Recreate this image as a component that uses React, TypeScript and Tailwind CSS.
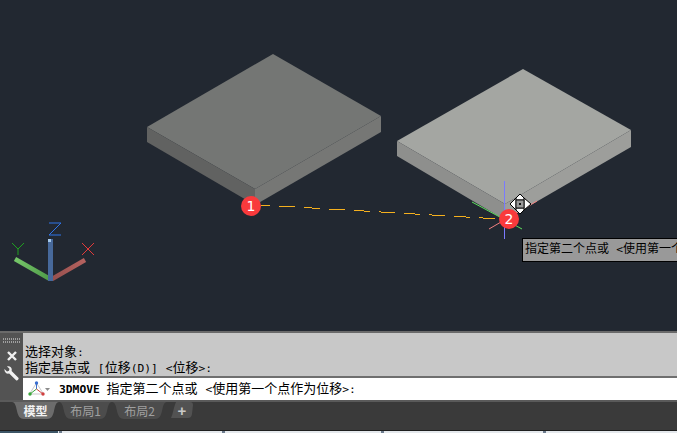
import React from "react";

const cjk = { fontFamily: '"DejaVu Sans Mono","Noto Sans CJK SC",monospace' };
const badge = { fontFamily: '"DejaVu Sans",sans-serif' };

function L({ children, bold }: { children: React.ReactNode; bold?: boolean }) {
  return <span className={bold ? "text-[11.3px] font-bold" : "text-[11.3px]"}>{children}</span>;
}

function Canvas() {
  return (
    <div className="relative h-[331px] overflow-hidden bg-[#222831]">
      <svg width="677" height="331" className="block" shapeRendering="crispEdges">
        <defs>
          <linearGradient id="g" x1="16" y1="259" x2="50" y2="279" gradientUnits="userSpaceOnUse">
            <stop offset="0" stopColor="#76c769" />
            <stop offset="1" stopColor="#4f9a48" />
          </linearGradient>
          <linearGradient id="r" x1="53" y1="279" x2="85" y2="260" gradientUnits="userSpaceOnUse">
            <stop offset="0" stopColor="#96504e" />
            <stop offset="1" stopColor="#b5625f" />
          </linearGradient>
        </defs>
        <g shapeRendering="auto">
          <polygon points="273,54 381,116 255,189 147,127" fill="#747674" />
          <polygon points="147,127 255,189 255,205 147,142" fill="#616261" />
          <polygon points="255,189 381,116 381,132 255,205" fill="#767775" />
          <polygon points="523,69 631,130 505,204 397,141" fill="#a4a6a2" />
          <polygon points="397,141 505,204 505,220 397,156" fill="#8e8f8d" />
          <polygon points="505,204 631,130 631,147 505,220" fill="#9d9e9b" />
        </g>
        <line x1="261" y1="205" x2="500" y2="219" stroke="#f5b01e" strokeWidth="1" strokeDasharray="16.5 8.5" strokeDashoffset="7" />
        <g shapeRendering="auto">
          <line x1="472" y1="202" x2="522" y2="229" stroke="#5fe05f" strokeWidth="1" />
          <line x1="489" y1="229" x2="537" y2="201" stroke="#f08080" strokeWidth="1" />
        </g>
        <line x1="504.5" y1="181" x2="504.5" y2="239" stroke="#7a7aff" strokeWidth="1" />
        <g shapeRendering="auto">
          <polygon points="520,194 526,200 514,200" fill="#fff" stroke="#000" />
          <polygon points="520,214 526,208 514,208" fill="#fff" stroke="#000" />
          <polygon points="510,204 516,198 516,210" fill="#fff" stroke="#000" />
          <polygon points="531,204 524,198 524,210" fill="#fff" stroke="#000" />
          <rect x="516" y="200" width="8" height="8" fill="#999" stroke="#111" />
          <rect x="519" y="203" width="2" height="2" fill="#111" />
        </g>
        <g shapeRendering="auto">
          <line x1="50" y1="279" x2="15" y2="259" stroke="url(#g)" strokeWidth="4.5" />
          <line x1="52" y1="279" x2="85" y2="260" stroke="url(#r)" strokeWidth="4.5" />
          <rect x="48" y="239" width="5" height="42" fill="#47699b" />
          <rect x="48" y="239" width="3" height="3" fill="#a5c8ea" />
          <polyline points="49,223 61,223 49,235 61,235" fill="none" stroke="#2f74e8" strokeWidth="1" />
          <polyline points="12,243 18,249 24,243" fill="none" stroke="#1fa01f" strokeWidth="1" />
          <line x1="18" y1="249" x2="18" y2="255" stroke="#1fa01f" strokeWidth="1" />
          <line x1="82" y1="243" x2="94" y2="255" stroke="#e23a3a" strokeWidth="1" />
          <line x1="94" y1="243" x2="82" y2="255" stroke="#e23a3a" strokeWidth="1" />
        </g>
      </svg>
      <div className="absolute left-[241px] top-[196px] flex h-5 w-5 items-center justify-center rounded-full bg-[#f93a3c] text-[14px] text-white" style={badge}>1</div>
      <div className="absolute left-[499px] top-[209px] flex h-5 w-5 items-center justify-center rounded-full bg-[#f93a3c] text-[14px] text-white" style={badge}>2</div>
      <div className="absolute left-[522px] top-[238px] h-[24px] w-[170px] whitespace-nowrap border border-black bg-[#999999] pl-[2px] text-[12px] leading-[20px] text-black" style={cjk}>
        指定第二个点或 <L>&lt;</L>使用第一个点作为位移<L>&gt;</L>
      </div>
    </div>
  );
}

function Tab({ label, w, active }: { label: string; w: number; active?: boolean }) {
  const d = `M0 0 C3 0 4 4 5 9 C6 14 8 17 12 17 L${w - 12} 17 C${w - 8} 17 ${w - 6} 14 ${w - 5} 9 C${w - 4} 4 ${w - 3} 0 ${w} 0 Z`;
  return (
    <div
      className={`relative flex h-[17px] items-center justify-center text-[12px] ${active ? "font-bold text-[#f2f2f2]" : "text-[#a0a0a0]"}`}
      style={{ width: w, fontFamily: '"Noto Sans CJK SC","Liberation Sans",sans-serif' }}
    >
      <svg width={w} height="17" viewBox={`0 0 ${w} 17`} className="absolute left-0 top-0">
        <path d={d} fill={active ? "#6c6c6c" : "#4c4c4c"} />
      </svg>
      <span className="relative">{label}</span>
    </div>
  );
}

function CommandPanel() {
  return (
    <div className="flex h-[69px] border-t-2 border-t-[#6a6a6a] bg-[#c8c8c8]">
      <div className="flex w-[23px] shrink-0 flex-col items-center bg-[#535353]">
        <div className="mt-[5px] grid grid-cols-9 gap-x-[1px] gap-y-[1px]">
          {Array.from({ length: 18 }).map((_, i) => (
            <div key={i} className="h-[2px] w-[1px] bg-[#a0a0a0]" />
          ))}
        </div>
        <svg width="12" height="12" viewBox="0 0 12 12" className="mt-[7px]">
          <path d="M2 2 L10 10 M10 2 L2 10" stroke="#f0f0f0" strokeWidth="2.4" />
        </svg>
        <svg width="15" height="15" viewBox="0 0 15 15" className="mt-[4px] ml-[-1px]">
          <path d="M0.5 3 L3 5.5 L5 4.8 L5.5 2.8 L3 0.5 C6 -0.5 8.5 2 7.6 5 L14.6 12 C15 13 13.5 15 12.3 14.4 L5.2 7.6 C2.5 8.4 0 6 0.5 3 Z" fill="#f0f0f0" />
        </svg>
      </div>
      <div className="flex min-w-0 flex-1 flex-col">
        <div className="flex h-[45px] flex-col justify-end border-b-2 border-b-[#6f6f6f] pl-[2px] text-[13px] leading-[15px] text-black" style={cjk}>
          <div>选择对象<L>:</L></div>
          <div>指定基点或 <L>[</L>位移<L>(D)]</L> <L>&lt;</L>位移<L>&gt;:</L></div>
        </div>
        <div className="flex h-[22px] items-center bg-white text-[13px] text-black" style={cjk}>
          <svg width="24" height="18" viewBox="0 0 24 18" className="ml-[3px] shrink-0">
            <path d="M10.5 3 L3.5 14 L17.5 14 Z" fill="none" stroke="#c9c9c9" />
            <line x1="10.5" y1="9" x2="10.5" y2="3" stroke="#3b6fd0" />
            <line x1="10.5" y1="9" x2="4" y2="14" stroke="#3aa63a" />
            <line x1="10.5" y1="9" x2="17" y2="14" stroke="#d04040" />
            <circle cx="10.5" cy="3" r="1.7" fill="#3b6fd0" />
            <circle cx="4" cy="14" r="1.7" fill="#3aa63a" />
            <circle cx="17" cy="14" r="1.7" fill="#d04040" />
            <path d="M19 8 L24 8 L21.5 11 Z" fill="#8c8c8c" />
          </svg>
          <span className="ml-[9px] whitespace-nowrap">
            <L bold>3DMOVE </L>指定第二个点或 <L>&lt;</L>使用第一个点作为位移<L>&gt;:</L>
          </span>
        </div>
      </div>
    </div>
  );
}

export default function App() {
  return (
    <div className="h-[433px] w-[677px] overflow-hidden bg-[#3a3a3a]">
      <Canvas />
      <CommandPanel />
      <div className="flex h-[30px] items-start border-t-2 border-t-[#5a5a5a] pl-[12px]">
        <Tab label="模型" w={47} active />
        <Tab label="布局1" w={53} />
        <Tab label="布局2" w={55} />
        <div className="relative ml-[4px] flex h-[16px] w-[22px] items-center justify-center text-[15px] font-bold leading-none text-[#c8c8c8]" style={{ fontFamily: '"Liberation Sans",sans-serif' }}>
          <svg width="22" height="16" viewBox="0 0 22 16" className="absolute left-0 top-0">
            <path d="M5 0 L19 0 C21 0 22 1 22 3 L21 12 C20.5 15 19 16 17 16 L0 16 C2 12 3 4 5 0 Z" fill="#525252" />
          </svg>
          <span className="relative">+</span>
        </div>
      </div>
      <div className="flex h-[3px] border-t border-t-[#1e1e1e] bg-[#e4e8ec]">
        <div className="w-[58px] bg-[#3c5566]" />
        <div className="ml-[1px] h-[2px] w-[3px] bg-[#6d7c8e]" />
        <div className="ml-[160px] h-[2px] w-[3px] bg-[#6d7c8e]" />
        <div className="ml-[156px] h-[2px] w-[3px] bg-[#6d7c8e]" />
        <div className="ml-[159px] h-[2px] w-[3px] bg-[#6d7c8e]" />
      </div>
    </div>
  );
}
